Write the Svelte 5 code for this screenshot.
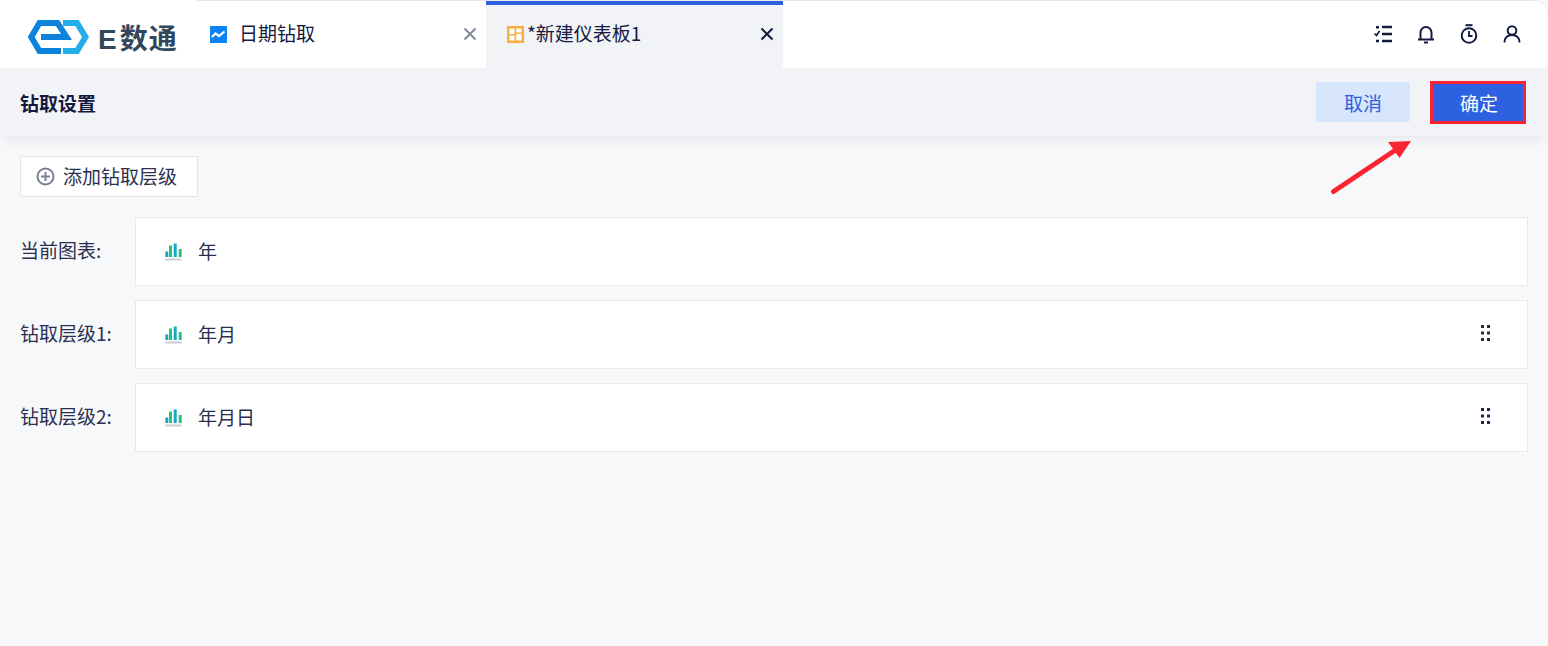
<script>
  const levels = [
    { label: '当前图表:', name: '年', drag: false },
    { label: '钻取层级1:', name: '年月', drag: true },
    { label: '钻取层级2:', name: '年月日', drag: true }
  ];
</script>

<div class="page">
  <header class="topbar">
    <div class="logo">
      <svg width="62" height="36" viewBox="0 0 62 36">
        <path d="M13 18H38.500L29.500 4H11.500L3.200 18l8.300 14H33" fill="none" stroke="#0b82dc" stroke-width="6" />
        <path d="M35 4H49L57.500 18 49 32H35" fill="none" stroke="#23ade9" stroke-width="6" />
      </svg>
      <span class="logo-text"><span class="logo-e">E</span>数通</span>
    </div>

    <div class="tab">
      <svg class="tab-icon" width="17" height="17" viewBox="0 0 17 17">
        <rect width="17" height="17" fill="#0a84f5" />
        <path d="M2 11l3.500-3.500 3.500 2.500 5.500-4.500" fill="none" stroke="#fff" stroke-width="2.200" />
      </svg>
      <span class="tab-title gap">日期钻取</span>
      <svg class="close" width="14" height="14" viewBox="0 0 14 14">
        <path d="M1.500 1.500l11 11M12.500 1.500l-11 11" stroke="#7c8496" stroke-width="1.800" />
      </svg>
    </div>

    <div class="tab active">
      <svg class="tab-icon" width="17" height="17" viewBox="0 0 17 17">
        <rect width="17" height="17" fill="#fbad41" />
        <path d="M2.500 2.500h5v5.500h-5zM9.200 2.500h5.300v4h-5.300zM2.500 9.500h5v5h-5zM9.200 8h5.300v6.500h-5.300z" fill="#fff" />
      </svg>
      <span class="tab-title">*新建仪表板1</span>
      <svg class="close" width="14" height="14" viewBox="0 0 14 14">
        <path d="M1.500 1.500l11 11M12.500 1.500l-11 11" stroke="#14193f" stroke-width="2" />
      </svg>
    </div>

    <div class="tools">
      <svg width="20" height="20" viewBox="0 0 20 20">
        <path d="M9 3h10M9 10h10M9 17h10" stroke="#14193f" stroke-width="2.400" />
        <path d="M1.500 9.500l2 2 3-4.500" fill="none" stroke="#14193f" stroke-width="1.600" />
        <path d="M3 2h3v2.400H3zM3 15.800h3v2.400H3z" fill="#14193f" />
      </svg>
      <svg width="20" height="20" viewBox="0 0 20 20">
        <path d="M4.500 15V8.500a5.500 5.500 0 0 1 11 0V15M2 15.500h16" fill="none" stroke="#14193f" stroke-width="2" />
        <path d="M8 18.500h4" stroke="#14193f" stroke-width="2" />
      </svg>
      <svg width="20" height="20" viewBox="0 0 20 20">
        <circle cx="10" cy="11.500" r="7.300" fill="none" stroke="#14193f" stroke-width="2" />
        <path d="M6.500 1.200h7" stroke="#14193f" stroke-width="2" />
        <path d="M10 7v5h3.500" fill="none" stroke="#14193f" stroke-width="1.800" />
      </svg>
      <svg width="20" height="20" viewBox="0 0 20 20">
        <circle cx="10" cy="6.500" r="4.300" fill="none" stroke="#14193f" stroke-width="2" />
        <path d="M2.500 18.500c0-4.500 3-7.500 7.500-7.500s7.500 3 7.500 7.500" fill="none" stroke="#14193f" stroke-width="2" />
      </svg>
    </div>
  </header>

  <div class="subbar">
    <h1>钻取设置</h1>
    <div class="actions">
      <button class="btn cancel">取消</button>
      <button class="btn ok">确定</button>
    </div>
  </div>

  <svg class="arrow" width="90" height="60" viewBox="0 0 90 60">
    <path d="M3.500 52.500L70 8" stroke="#fa2433" stroke-width="5" stroke-linecap="round" />
    <path d="M81 2L58 3 69.500 19z" fill="#fa2433" />
  </svg>

  <main class="content">
    <button class="add">
      <svg width="19" height="19" viewBox="0 0 19 19">
        <circle cx="9.500" cy="9.500" r="8" fill="none" stroke="#7a8094" stroke-width="2" />
        <path d="M9.500 5v9M5 9.500h9" stroke="#7a8094" stroke-width="2" />
      </svg>
      <span class="add-text">添加钻取层级</span>
    </button>

    <div class="rows">
      {#each levels as level}
        <div class="row">
          <span class="label">{level.label}</span>
          <div class="card">
            <svg width="18" height="18" viewBox="0 0 18 18">
              <rect x="1.300" y="8.500" width="3" height="5.500" fill="#12a9c4" />
              <rect x="5" y="2.500" width="3" height="11.500" fill="#2cc07e" />
              <rect x="9.700" y="0.500" width="3" height="13.500" fill="#12a9c4" />
              <rect x="14.700" y="6" width="3" height="8" fill="#2cc07e" />
              <rect x="1.300" y="15.500" width="16.400" height="2" fill="#c9ced8" />
            </svg>
            <span class="name">{level.name}</span>
            {#if level.drag}
              <svg class="drag" width="9" height="16" viewBox="0 0 9 16">
                <path d="M0 0h3v3H0zM6 0h3v3H6zM0 6.500h3v3H0zM6 6.500h3v3H6zM0 13h3v3H0zM6 13h3v3H6z" fill="#23284d" />
              </svg>
            {/if}
          </div>
        </div>
      {/each}
    </div>
  </main>
</div>

<style>
  :global(body) {
    margin: 0;
    background: #f7f8fa;
  }

  .page {
    position: relative;
    height: 646px;
    overflow: hidden;
    font-family: "Noto Sans CJK SC", "Liberation Sans", sans-serif;
    font-size: 19px;
    color: #14193f;
  }

  .topbar {
    display: flex;
    height: 68px;
    background: #fff;
    border-radius: 0 14px 0 0;
    box-shadow: inset 0 1px 0 #e8e9ec;
  }

  .logo {
    display: flex;
    align-items: center;
    gap: 8px;
    width: 197px;
    padding: 5px 0 0 28px;
    box-sizing: border-box;
    background: #fff;
  }

  .logo-text {
    font-size: 28px;
    font-weight: 700;
    color: #33475b;
    letter-spacing: 1px;
    white-space: nowrap;
  }

  .logo-e {
    font-family: "Liberation Sans", sans-serif;
    margin-right: 2px;
  }

  .tab {
    display: flex;
    align-items: center;
    width: 289px;
    box-sizing: border-box;
    padding: 0 9px 0 13px;
  }

  .tab.active {
    width: 297px;
    padding: 0 9px 0 21px;
    background: #f2f3f7;
    border-top: 4px solid #2d61e0;
    margin-top: 1px;
    height: 67px;
  }

  .tab-title {
    flex: 1;
    margin-left: 4px;
    padding-bottom: 4px;
    white-space: nowrap;
  }

  .tab-title.gap {
    margin-left: 12px;
  }

  .tab.active .tab-title {
    margin-left: 3px;
    padding-bottom: 8px;
  }

  .tab.active .tab-icon {
    margin-top: -5px;
  }

  .tab.active .close {
    margin-top: -6px;
  }

  .tools {
    display: flex;
    align-items: center;
    gap: 23px;
    margin-left: auto;
    padding-right: 26px;
  }

  .subbar {
    display: flex;
    align-items: center;
    justify-content: space-between;
    height: 68px;
    padding: 0 22px 0 20px;
    background: #f2f3f7;
    box-shadow: 0 8px 10px -4px rgba(30, 40, 80, 0.08);
    position: relative;
  }

  h1 {
    margin: 0;
    font-size: 19px;
    font-weight: 700;
    color: #14193f;
  }

  .actions {
    display: flex;
    align-items: center;
    gap: 20px;
  }

  .btn {
    font: inherit;
    border: none;
    padding: 0;
    cursor: pointer;
  }

  .cancel {
    width: 94px;
    height: 40px;
    border-radius: 3px;
    background: #d7e5fd;
    color: #2d61e0;
  }

  .ok {
    width: 96px;
    height: 43px;
    box-sizing: border-box;
    padding-left: 2px;
    background: #2d61e0;
    color: #fff;
    border: 3px solid #fa2433;
  }

  .arrow {
    position: absolute;
    left: 1330px;
    top: 139px;
  }

  .content {
    padding: 20px 20px 0;
  }

  .add {
    display: flex;
    align-items: center;
    gap: 8px;
    width: 178px;
    height: 41px;
    padding: 0 0 0 15px;
    font: inherit;
    color: #2a2f52;
    background: #fff;
    border: 1px solid #e2e4ec;
    border-radius: 2px;
    box-sizing: border-box;
  }

  .add-text {
    padding-bottom: 3px;
  }

  .rows {
    display: flex;
    flex-direction: column;
    gap: 14px;
    margin-top: 20px;
  }

  .row {
    display: flex;
    align-items: center;
    gap: 0;
  }

  .label {
    width: 115px;
    flex: none;
    padding-bottom: 5px;
    color: #2a2f52;
    white-space: nowrap;
  }

  .card {
    flex: 1;
    display: flex;
    align-items: center;
    height: 69px;
    box-sizing: border-box;
    padding: 0 37px 0 28px;
    background: #fff;
    border: 1px solid #e8e9ee;
  }

  .name {
    margin-left: 16px;
    padding-bottom: 2px;
    color: #2a2f52;
  }

  .drag {
    margin-left: auto;
    margin-top: -3px;
  }
</style>
